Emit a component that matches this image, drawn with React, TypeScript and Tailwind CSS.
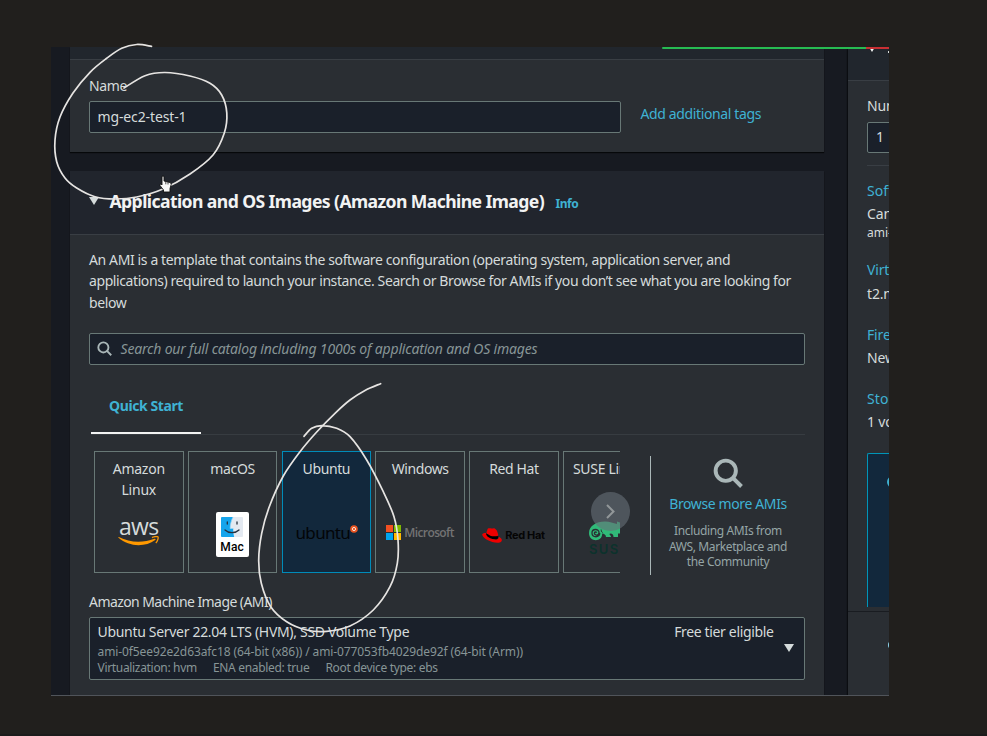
import React from 'react';

type Point = [number, number];

const nameStroke: Point[] = [
  [151.500, 46.300], [136.700, 44.500], [121.700, 48.300], [106.700, 58.300], [90, 72.300], [73, 93], [60, 117], [55, 140],
  [56.700, 161.700], [65, 178], [76.700, 188], [95, 196.700], [115, 199], [136.700, 197], [163, 189], [190, 174],
  [213, 155], [224.300, 133], [226.800, 113], [221.700, 95], [210, 83.300], [190, 76], [165, 72.500], [145, 75.700], [124, 88],
];

const ubuntuStroke: Point[] = [
  [380.600, 383.700], [365, 390.400], [350, 400], [335, 413.300], [316.700, 432], [300, 451.700], [283.300, 476], [269.300, 506.700],
  [261.700, 533.300], [258.700, 560], [261.300, 583.300], [270.700, 606.700], [286.700, 621.700], [306.700, 630], [326.700, 631.300],
  [350, 626], [373.300, 610], [390, 586.700], [397.300, 563.300], [398, 540], [394, 516.700], [383.300, 491.700], [366.700, 460],
  [350, 436.700], [336.700, 428.300], [321.700, 425.600], [311.700, 428.300], [304, 436.300],
];

/* Smooth curve through every point of a pen stroke. */
function smooth(p: Point[]): string {
  let d = `M${p[0][0]} ${p[0][1]}`;
  for (let i = 0; i < p.length - 1; i++) {
    const a = p[Math.max(0, i - 1)];
    const b = p[i];
    const c = p[i + 1];
    const e = p[Math.min(p.length - 1, i + 2)];
    d += `C${b[0] + (c[0] - a[0]) / 6} ${b[1] + (c[1] - a[1]) / 6} ${c[0] - (e[0] - b[0]) / 6} ${c[1] - (e[1] - b[1]) / 6} ${c[0]} ${c[1]}`;
  }
  return d;
}

function Search({ className, stroke }: { className: string; stroke: number }) {
  return (
    <svg className={className} viewBox="0 0 16 16" fill="none" stroke="currentColor" strokeWidth={stroke}>
      <circle cx="6.8" cy="6.8" r="5.4" />
      <path d="M10.6 10.6 15.2 15.2" />
    </svg>
  );
}

function AwsLogo() {
  return (
    <div className="mt-[13px] flex h-[36px] flex-col items-center">
      <span className="font-['Open_Sans',sans-serif] text-[23px] leading-[26px] font-medium tracking-[-0.700px] text-[#d5dbdb]">aws</span>
      <svg className="-mt-[3px] h-[10px] w-[42px]" viewBox="0 0 42 10" fill="none">
        <path d="M.8 1C12 7 25 7 36.500 2.800c1-.4 1.600.5.7 1.200C27 11.500 11 11 .5 1.800.2 1.400.4.8.8 1Z" fill="#ff9900" />
        <path d="M34 1.600c2-1.200 5.500-1.300 6-.7.5.8-.3 4.500-2.200 6.200" stroke="#ff9900" strokeWidth="1.300" />
      </svg>
    </div>
  );
}

function MacLogo() {
  return (
    <div className="mt-[33px] mr-[1px] flex h-[45px] w-[33px] flex-col items-center rounded-[2px] bg-white pt-[5px]">
      <svg className="h-[20px] w-[22px]" viewBox="0 0 22 20">
        <rect width="22" height="20" rx="1" fill="#e3e9f1" />
        <path d="M0 1Q0 0 1 0H12C10 4 9.200 8 9.200 11.500H12.200C12.200 15 12.600 18 13.200 20H1Q0 20 0 19Z" fill="#16a5ec" />
        <path d="M12 0C10 4 9.200 8 9.200 11.500H12.200" fill="none" stroke="#9ed8f8" strokeWidth=".7" />
        <path d="M4 13c3.500 3.500 10.500 3.500 14 0M6.300 5v2M16 5v2" fill="none" stroke="#26313f" strokeWidth="1.300" strokeLinecap="round" />
      </svg>
      <span className="font-[Roboto,sans-serif] text-[12px] leading-[20px] font-medium tracking-[0.100px] text-black">Mac</span>
    </div>
  );
}

function UbuntuLogo() {
  return (
    <div className="mt-[41px] ml-[1px] flex h-[24px] items-start pt-[1px]">
      <span className="font-['Noto_Sans',sans-serif] text-[17px] leading-[24px] tracking-[-0.650px] text-[#030508]">ubuntu</span>
      <svg className="mt-[4px] h-[8px] w-[8px]" viewBox="0 0 8 8">
        <circle cx="4" cy="4" r="3.800" fill="#e95420" />
        <circle cx="4" cy="4" r="1.600" fill="none" stroke="#fbe3da" strokeWidth="1" />
      </svg>
    </div>
  );
}

function MicrosoftLogo() {
  return (
    <div className="mt-[41px] flex h-[24px] items-center gap-[3px]">
      <div className="grid h-[15px] w-[15px] grid-cols-2 gap-[1px]">
        <i className="bg-[#f25022]" />
        <i className="bg-[#7fba00]" />
        <i className="bg-[#00a4ef]" />
        <i className="bg-[#ffb900]" />
      </div>
      <span className="font-['Open_Sans',sans-serif] text-[12px] font-semibold tracking-[-0.600px] text-[#737373]">Microsoft</span>
    </div>
  );
}

function RedHatLogo() {
  return (
    <div className="mt-[44px] mr-[1px] flex h-[24px] items-center gap-[3px]">
      <svg className="h-[15px] w-[20px]" viewBox="0 0 20 15">
        <path d="M3.500 5.500 16.600 8.500 15 12 4 9.500Z" fill="#000" />
        <path d="M5.700.8C6.800-.2 8.300.4 9.500.5c1.200.1 2-.6 3.200-.1 1.900.8 2.900 3.300 3.500 6.300.4 2.200-5.400 1.900-8.300.7C5.600 6.400 4.200 5.400 4.500 4.300Z" fill="#e00" />
        <path d="M4 4.900C2 4.800.2 5.200.2 6.600c0 3.500 8.800 8.200 15.300 8.200 3.600 0 4.300-1.500 4.300-2.700 0-1.300-1.300-2.500-3.100-3.300.3 1.600-.4 2.600-3.100 2.600-4.200 0-10-2.900-9.600-6.500Z" fill="#e00" />
      </svg>
      <span className="font-[Inter,sans-serif] text-[11px] font-bold tracking-[-0.350px] whitespace-nowrap text-[#050505]">Red Hat</span>
    </div>
  );
}

function SuseLogo() {
  return (
    <div className="mt-[42px] h-[38px] w-[40px] self-start pl-[25px]">
      <svg className="block h-[20px] w-[40px]" viewBox="0 0 40 20">
        <path d="M0 12C0 5 7 .5 16 .5c5 0 8 1.500 12 2.500V.5l5 1.500c4 1 5 4 5 7-1 3-5 4-9 3.500V16h-4.500c0-2-1-3.500-3-3.500-1 0-1.500.5-.5 1.500.7.7 1 1 1 2h-5c0-2-2-3.500-3.800-3.500C13.500 21.500 0 21.500 0 12Z" fill="#30ba78" />
        <path d="M13.600 11.500c-1.500-.5-1.200-2-1.500-3" fill="none" stroke="#2a2e33" strokeWidth="1" />
        <path d="M10.700 12c.3 5-7.700 5-7.700 0 0-4.600 7-4.600 7-.3 0 3.300-4.800 3-4.600.3.1-1.300 1.800-1.300 2.200-.3" fill="none" stroke="#2a2e33" strokeWidth="1.300" />
      </svg>
      <span className="mt-[1px] block font-[Inter,sans-serif] text-[13px] leading-[15px] font-semibold tracking-[1.400px] text-[#0c322c]">SUSE</span>
    </div>
  );
}

const card = 'flex h-[122px] w-[89.500px] shrink-0 flex-col items-center border border-[#687876] pt-[7px] text-center leading-[21px]';

export default function App() {
  return (
    <div className="relative h-[736px] w-[987px] overflow-hidden bg-[#211f1d] pt-[47px] pl-[51px] font-['Noto_Sans',sans-serif] text-[14px] text-[#d5dbdb]">
      <div className="flex h-[649px] w-[838px] overflow-hidden border-b border-[#50545a] bg-[#171a21] pl-[19px]">
        <main className="w-[754px] shrink-0">
          <section className="h-[105px] bg-[#2a2e33] shadow-[0_1px_1px_#06080a]">
            <div className="h-[13px] border-b border-[#393e44] bg-[#21262d]" />
            <div className="px-[19px] pt-[16px]">
              <div className="h-[25px] leading-[20px] tracking-[-0.400px]">Name</div>
              <div className="flex items-center">
                <div className="h-[32px] w-[532px] rounded-[2px] border border-[#687876] bg-[#1a202a] px-[7.500px] leading-[30px] tracking-[-0.120px]">mg-ec2-test-1</div>
                <a className="ml-[19.500px] -mt-[8px] tracking-[-0.370px] text-[#3fb2d3]">Add additional tags</a>
              </div>
            </div>
          </section>
          <section className="mt-[19px] h-[540px] bg-[#2a2e33] shadow-[0_1px_1px_#06080a]">
            <header className="flex h-[64px] items-center border-b border-[#393e44] bg-[#21252d] pb-[3px] pl-[19px]">
              <i className="h-0 w-0 border-x-[5.500px] border-t-[8px] border-x-transparent border-t-[#d5dbdb]" />
              <h2 className="ml-[10.500px] text-[17.600px] font-bold tracking-[-0.590px] whitespace-nowrap text-[#f2f3f3]">Application and OS Images (Amazon Machine Image)</h2>
              <a className="mt-[5px] ml-[11.500px] text-[12px] font-bold tracking-[-0.500px] text-[#3fb2d3]">Info</a>
            </header>
            <div className="px-[19px] pt-[14px]">
              <p className="h-[84px] leading-[21.300px] tracking-[-0.400px] whitespace-nowrap">
                <span className="tracking-[-0.385px]">An AMI is a template that contains the software configuration (operating system, application server, and</span><br />
                <span className="tracking-[-0.410px]">applications) required to launch your instance. Search or Browse for AMIs if you don’t see what you are looking for</span><br />
                below
              </p>
              <div className="flex h-[32px] items-center rounded-[2px] border border-[#687876] bg-[#1a202a] pb-[2px] pl-[7px]">
                <Search className="mt-[1px] h-[15px] w-[15px] text-[#aab7b8]" stroke={2} />
                <span className="ml-[8.500px] tracking-[-0.180px] text-[#879596] italic">Search our full catalog including 1000s of application and OS images</span>
              </div>
              <div className="ml-[2px] h-[70px] border-b border-[#373c41] pt-[30px]">
                <div className="h-[39px] w-[110px] border-b-2 border-[#f2f3f3] text-center leading-[21px] font-bold tracking-[-0.420px] text-[#3fb2d3]">Quick Start</div>
              </div>
              <div className="relative flex">
                <div className="flex h-[140px] w-[531px] gap-[4.300px] overflow-hidden pt-[16px] pl-[5px]">
                  <div className={card}><span className="-mt-px tracking-[-0.250px]">Amazon<br />Linux</span><AwsLogo /></div>
                  <div className={card}><span className="-mt-px tracking-[-0.350px]">macOS</span><MacLogo /></div>
                  <div className="flex h-[122px] w-[89.500px] shrink-0 flex-col items-center border border-[#008bb9] bg-[#12283c] pt-[7px] text-center leading-[21px]"><span className="-mt-px tracking-[-0.400px]">Ubuntu</span><UbuntuLogo /></div>
                  <div className={card}><span className="-mt-px tracking-[-0.400px]">Windows</span><MicrosoftLogo /></div>
                  <div className={card}><span className="-mt-px tracking-[-0.400px]">Red Hat</span><RedHatLogo /></div>
                  <div className={card}><span className="-mt-px w-full pl-[9px] text-left tracking-[-0.300px] whitespace-nowrap">SUSE Linux</span><SuseLogo /></div>
                </div>
                <div className="absolute top-[57px] left-[502px] flex h-[39px] w-[39px] items-center justify-center rounded-full bg-[#687078]/60">
                  <svg className="h-[15px] w-[9px]" viewBox="0 0 9 15" fill="none" stroke="#929799" strokeWidth="2"><path d="m1 1 6.500 6.500L1 14" /></svg>
                </div>
                <div className="mt-[21px] ml-[30px] flex h-[119px] flex-1 flex-col items-center border-l border-[#aab7b8] text-center">
                  <Search className="mt-[2px] h-[30px] w-[30px] text-[#aab7b8]" stroke={2.1} />
                  <a className="mt-[5px] leading-[22px] tracking-[-0.380px] text-[#3fb2d3]">Browse more AMIs</a>
                  <p className="mt-[8px] text-[12px] leading-[15.500px] tracking-[-0.380px] text-[#95a5a6]">Including AMIs from<br />AWS, Marketplace and<br />the Community</p>
                </div>
              </div>
              <div className="mt-[17px] h-[25px] leading-[20px] tracking-[-0.570px]">Amazon Machine Image (AMI)</div>
              <div className="flex h-[63px] justify-between rounded-[2px] border border-[#687876] bg-[#1a202a] px-[7.500px] pt-[4px]">
                <div>
                  <div className="leading-[20px] tracking-[-0.310px]">Ubuntu Server 22.04 LTS (HVM), SSD Volume Type</div>
                  <div className="mt-[2px] text-[12px] leading-[15.500px] tracking-[-0.100px] text-[#879596]">
                    ami-0f5ee92e2d63afc18 (64-bit (x86)) / ami-077053fb4029de92f (64-bit (Arm))
                    <div className="flex gap-[16px] tracking-[-0.320px]"><span>Virtualization: hvm</span><span>ENA enabled: true</span><span>Root device type: ebs</span></div>
                  </div>
                </div>
                <div className="flex">
                  <span className="leading-[20px] tracking-[-0.350px]">Free tier eligible</span>
                  <i className="mt-[22px] mr-[2.500px] ml-[10.500px] h-0 w-0 border-x-[5px] border-t-[8px] border-x-transparent border-t-[#d5dbdb]" />
                </div>
              </div>
            </div>
          </section>
        </main>
        <aside className="ml-[24px] w-[41px] shrink-0 overflow-hidden bg-[#2a2e33] whitespace-nowrap shadow-[-1px_0_1px_#0b0d11]">
          <div className="flex h-[34px] items-start justify-between border-b border-[#393e44] bg-[#21262d] pl-[21px]">
            <i className="h-0 w-0 border-x-[3px] border-t-[5px] border-x-transparent border-t-[#f2f3f3]" />
            <i className="mt-[4px] h-[2px] w-[1px] bg-[#d5dbdb]" />
          </div>
          <div className="h-[483px] pl-[19px] leading-[20px] tracking-[-0.150px]">
            <div className="pt-[15px]">Number of instances</div>
            <div className="mt-[6px] h-[31px] w-[180px] rounded-[2px] border border-[#687876] bg-[#1a202a] pl-[8px] leading-[28px]">1</div>
            <div className="mt-[12px] w-[180px] border-t border-[#393e44]" />
            <div className="mt-[15px] tracking-[0.100px] text-[#3fb2d3]">Software Image (AMI)</div>
            <div className="mt-[3px]">Canonical, Ubuntu</div>
            <div className="text-[12px] leading-[17px] tracking-[0px]">ami-0f5ee92e2d63afc18</div>
            <div className="mt-[19px] text-[#3fb2d3]">Virtual server type</div>
            <div className="mt-[4px]">t2.micro</div>
            <div className="mt-[21px] text-[#3fb2d3]">Firewall (security group)</div>
            <div className="mt-[3px]">New security group</div>
            <div className="mt-[21px] tracking-[0.100px] text-[#3fb2d3]">Storage (volumes)</div>
            <div className="mt-[3px]">1 volume(s) - 8 GiB</div>
            <div className="mt-[21px] h-[154px] w-[180px] rounded-tl-[2px] border-t border-l border-[#0095b8] bg-[#12283c] pt-[22px] pl-[19px]">
              <div className="h-[12px] w-[12px] rounded-full border-2 border-[#3fb2d3]" />
            </div>
          </div>
          <div className="mt-[47px] border-t border-[#191c21] pt-[29px] pl-[40px]">
            <i className="block h-[8px] w-[8px] rounded-full bg-[#8ed5ed]" />
          </div>
        </aside>
      </div>
      <div className="absolute top-[47px] left-[662px] flex h-[2px] w-[227px]">
        <i className="w-[204px] rounded-l-full bg-[#27bb52]" />
        <i className="flex-1 bg-[#c92f33]" />
      </div>
      <div className="absolute bottom-0 left-0 h-[2px] w-full bg-[#1b1b1b]" />
      <svg className="absolute top-0 left-0 h-[736px] w-[987px]" viewBox="0 0 987 736" fill="none" stroke="#e6e4e2" strokeWidth="1.700" strokeLinecap="round">
        <path d={smooth(nameStroke)} />
        <path d={smooth(ubuntuStroke)} />
      </svg>
      <svg className="absolute top-[175px] left-[159px] h-[18px] w-[13px]" viewBox="0 0 13 18">
        <path d="M3 1.500Q4 .3 5 1.500V6l6 1.500q1.300.5 1.200 2L11 13.500V17H4.500v-2L1 10.500Q.3 9 2 9l1 1Z" fill="#f7f7f7" stroke="#111" strokeWidth=".9" />
        <path d="M6.800 6.500v2.800M9 7v2.500" stroke="#222" strokeWidth=".8" />
      </svg>
    </div>
  );
}
